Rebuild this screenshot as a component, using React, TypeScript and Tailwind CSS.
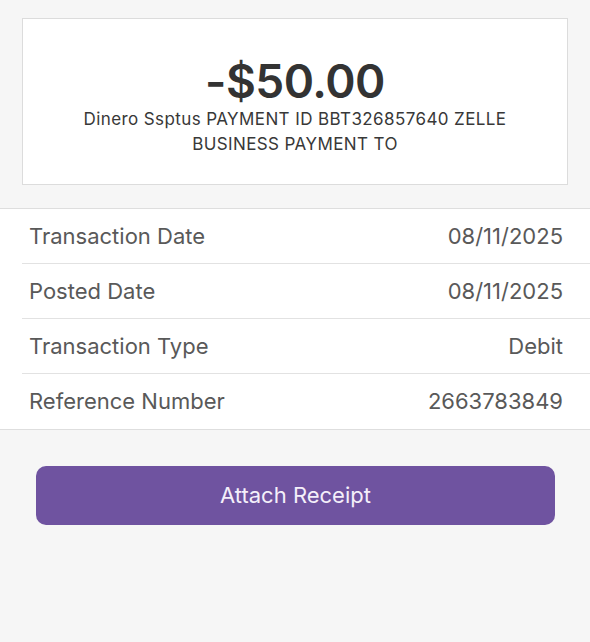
export default function App() {
  const rows = [
    { label: "Transaction Date", value: "08/11/2025" },
    { label: "Posted Date", value: "08/11/2025" },
    { label: "Transaction Type", value: "Debit" },
    { label: "Reference Number", value: "2663783849" },
  ];

  return (
    <div className="min-h-[642px] w-full bg-[#f6f6f6] font-['Inter',sans-serif]">
      {/* Amount summary */}
      <div className="px-[22px] pt-[18px] pb-[23px]">
        <div className="flex h-[167px] flex-col items-center justify-center border border-[#dcdcdc] bg-white px-6 pt-[8px]">
          <div className="text-[46px] font-semibold leading-[52px] tracking-[-0.5px] text-[#333333]">-$50.00</div>
          <div className="text-center text-[17px] leading-[25px] tracking-[0.4px] text-[#383838]">
            Dinero Ssptus PAYMENT ID BBT326857640 ZELLE
            <br />
            BUSINESS PAYMENT TO
          </div>
        </div>
      </div>

      {/* Details list */}
      <div className="border-y border-[#dedede] bg-white pl-[22px]">
        {rows.map((row, i) => (
          <div
            key={row.label}
            className={`flex h-[55px] items-center justify-between pr-[27px] pl-[7px] text-[22px] text-[#595959] ${
              i < rows.length - 1 ? "border-b border-[#e2e2e2]" : ""
            }`}
          >
            <span>{row.label}</span>
            <span>{row.value}</span>
          </div>
        ))}
      </div>

      <div className="px-[36px] pt-[36px] pr-[35px]">
        <button className="h-[59px] w-full rounded-[10px] bg-[#6f53a0] text-[22px] text-[#f4effa]">
          Attach Receipt
        </button>
      </div>
    </div>
  );
}
